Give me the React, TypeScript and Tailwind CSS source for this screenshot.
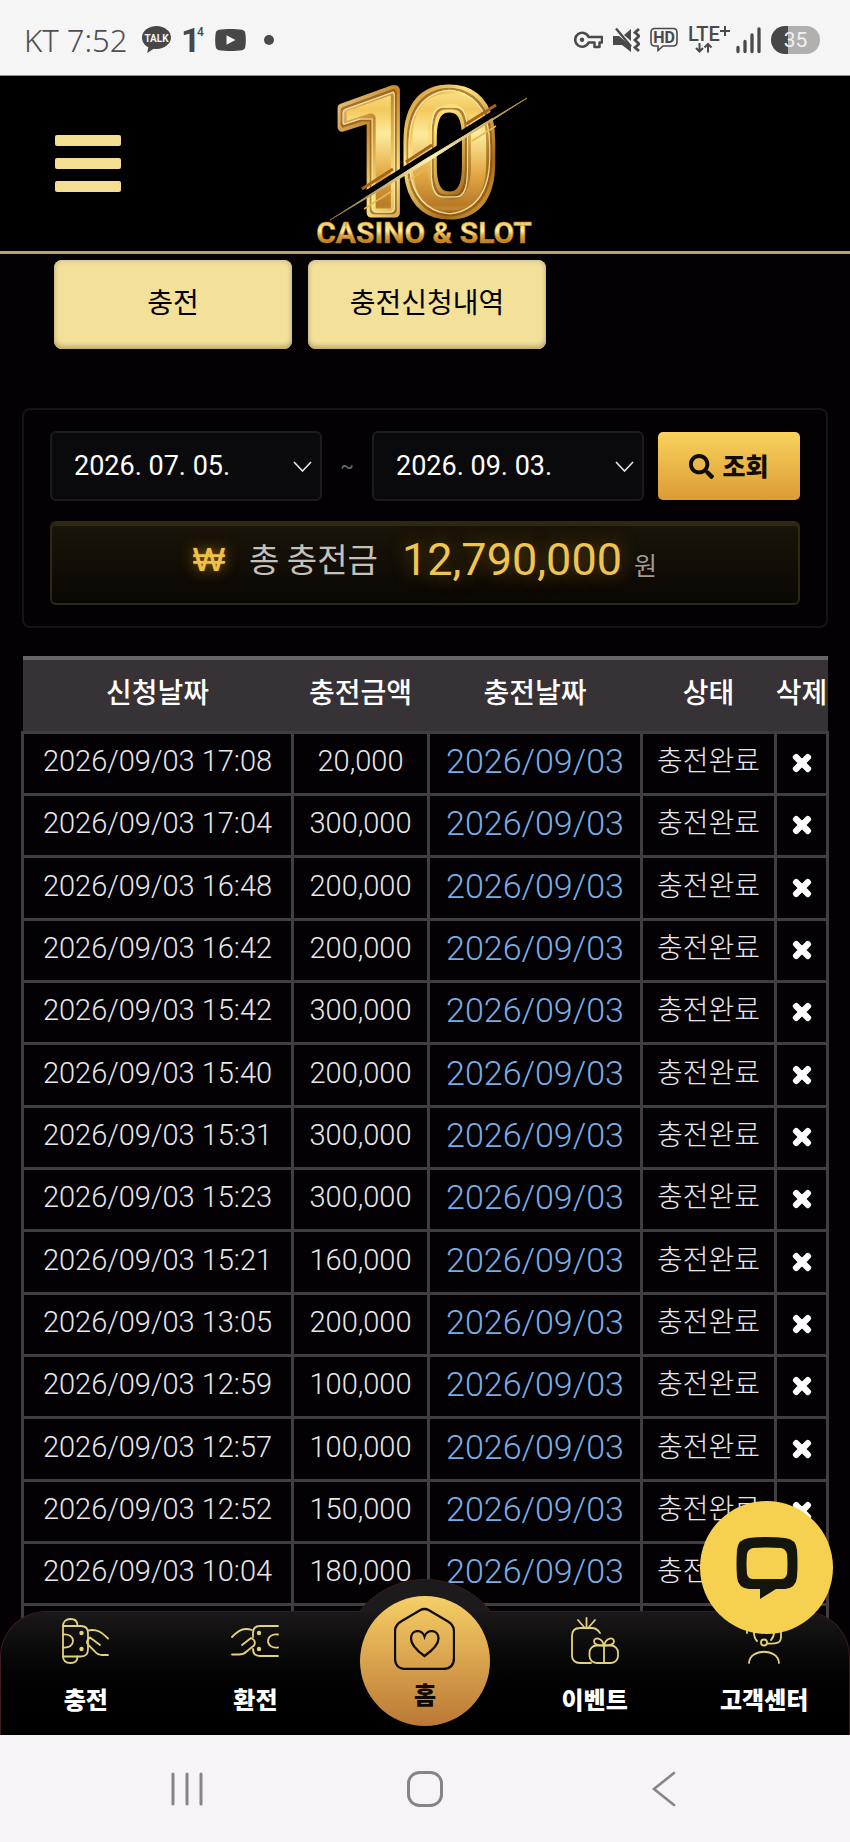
import type { ReactNode } from 'react';
import { FaSearch, FaTimes } from 'react-icons/fa';

interface Deposit {
  requestedAt: string;
  amount: string;
  depositedAt: string;
}

const deposits: Deposit[] = [
  { requestedAt: '2026/09/03 17:08', amount: '20,000', depositedAt: '2026/09/03' },
  { requestedAt: '2026/09/03 17:04', amount: '300,000', depositedAt: '2026/09/03' },
  { requestedAt: '2026/09/03 16:48', amount: '200,000', depositedAt: '2026/09/03' },
  { requestedAt: '2026/09/03 16:42', amount: '200,000', depositedAt: '2026/09/03' },
  { requestedAt: '2026/09/03 15:42', amount: '300,000', depositedAt: '2026/09/03' },
  { requestedAt: '2026/09/03 15:40', amount: '200,000', depositedAt: '2026/09/03' },
  { requestedAt: '2026/09/03 15:31', amount: '300,000', depositedAt: '2026/09/03' },
  { requestedAt: '2026/09/03 15:23', amount: '300,000', depositedAt: '2026/09/03' },
  { requestedAt: '2026/09/03 15:21', amount: '160,000', depositedAt: '2026/09/03' },
  { requestedAt: '2026/09/03 13:05', amount: '200,000', depositedAt: '2026/09/03' },
  { requestedAt: '2026/09/03 12:59', amount: '100,000', depositedAt: '2026/09/03' },
  { requestedAt: '2026/09/03 12:57', amount: '100,000', depositedAt: '2026/09/03' },
  { requestedAt: '2026/09/03 12:52', amount: '150,000', depositedAt: '2026/09/03' },
  { requestedAt: '2026/09/03 10:04', amount: '180,000', depositedAt: '2026/09/03' },
];

function StatusBar() {
  return (
    <div className="flex h-[76px] shrink-0 items-center justify-between border-b border-[#8a8f8c] bg-[#f5f5f5] pt-1 pl-6 pr-[30px] text-[#4f4f4f]">
      <div className="flex items-center">
        <span className="w-[118px] font-['Noto_Sans'] text-[31px] leading-8 font-light whitespace-nowrap">KT 7:52</span>
        <svg className="h-7 w-[29px]" viewBox="0 0 29 28">
          <path d="M14.500 0C6.500 0 0 5 0 11.500c0 4.200 2.600 7.800 6.300 9.800L5.200 27l6.500-4.300c1 .1 1.900.2 2.800.2 8 0 14.500-5.100 14.500-11.400S22.500 0 14.500 0z" fill="#474747" />
          <text x="14.500" y="15.500" textAnchor="middle" fontSize="10" fontWeight="700" fill="#f5f5f5" fontFamily="Roboto, sans-serif">TALK</text>
        </svg>
        <div className="ml-[10px] flex w-[34px] items-start font-['Roboto'] text-[#474747]">
          <span className="w-4 text-[34px] leading-8 font-bold">1</span>
          <span className="pt-[2px] text-[12px] leading-3 font-medium">4</span>
        </div>
        <svg className="h-[22px] w-[31px]" viewBox="0 0 31 22">
          <path d="M4 .8c6-1 17-1 23 0 2 .4 3 1.500 3.300 3.400.7 4 .7 9.600 0 13.600-.3 1.900-1.300 3-3.300 3.400-6 1-17 1-23 0-2-.4-3-1.500-3.300-3.400-.7-4-.7-9.600 0-13.600C1 2.300 2 1.200 4 .8z" fill="#474747" />
          <path d="M11.500 6.200v9.600l9-4.800z" fill="#f5f5f5" />
        </svg>
        <span className="ml-[18px] size-[10px] rounded-full bg-[#4a4a4a]" />
      </div>

      <div className="flex items-center gap-[10px]">
        <svg className="h-[18px] w-[29px]" viewBox="0 0 29 18" fill="none" stroke="#4a4a4a" strokeWidth="2.500">
          <path d="M14.600 6H28v5.500h-2.500V16h-5v-4.500h-5.900A7 7 0 1 1 14.600 6z" strokeLinejoin="round" />
          <circle cx="8" cy="8.800" r="2.200" fill="#4a4a4a" stroke="none" />
        </svg>
        <svg className="h-[26px] w-[27px]" viewBox="0 0 27 26">
          <path d="M0 9h6l12 10v6l-9-7H0zM11 8 18 2v12z" fill="#4a4a4a" />
          <path d="M3 1.500l15 18" stroke="#4a4a4a" strokeWidth="2.400" />
          <path d="M26 2l-4 3.500 4 3.500-4 4 4 4-4 3.500 4 3.500" fill="none" stroke="#4a4a4a" strokeWidth="2.800" />
        </svg>
        <svg className="h-[25px] w-7" viewBox="0 0 28 25">
          <path d="M5 1.500h18q4 0 4 4V15q0 4-4 4H13l-5 4.500V19H5q-4 0-4-4V5.500q0-4 4-4z" fill="none" stroke="#4a4a4a" strokeWidth="1.600" />
          <text x="14" y="16" textAnchor="middle" fontSize="16" fontWeight="700" fill="#4a4a4a" fontFamily="Roboto, sans-serif">HD</text>
        </svg>
        <div className="flex w-[43px] flex-col font-['Roboto'] text-xl leading-4 font-medium text-[#4a4a4a]">
          <span className="flex items-start">
            LTE
            <svg className="h-[10px] w-[10px] shrink-0" viewBox="0 0 10 10" stroke="#4a4a4a" strokeWidth="2">
              <path d="M5 0v10M0 5h10" />
            </svg>
          </span>
          <svg className="ml-[7px] h-[11px] w-[18px]" viewBox="0 0 18 11" fill="none" stroke="#4a4a4a" strokeWidth="2">
            <path d="M4.500 1v8.500M1 6l3.500 3.500L8 6M13 10.500V2M9.500 5.500 13 2l3.500 3.500" />
          </svg>
        </div>
        <svg className="-ml-[6px] h-7 w-[26px]" viewBox="0 0 26 28" stroke="#4a4a4a" strokeWidth="3.300" strokeLinecap="round">
          <path d="M3 21.500v4M10 15.500v10M17 9v16.500M24 3v22.500" />
        </svg>
        <span className="flex h-7 w-[49px] items-center justify-center rounded-full bg-linear-to-r from-[#474747] from-34% to-[#b0b0b0] to-34% font-['Roboto'] text-[21px] leading-7 text-[#f0f0f0]">35</span>
      </div>
    </div>
  );
}

function Logo() {
  return (
    <svg className="h-[175px] w-[260px]" viewBox="5 1 260 175" role="img" aria-label="10 CASINO &amp; SLOT">
      <defs>
        <linearGradient id="face" x1="0" y1="0" x2="0" y2="1">
          <stop offset="0.1" stopColor="#fff3ae" />
          <stop offset="0.28" stopColor="#f3c95c" />
          <stop offset="0.4" stopColor="#fdeb9c" />
          <stop offset="0.6" stopColor="#e2a845" />
          <stop offset="0.75" stopColor="#b87b28" />
          <stop offset="0.9" stopColor="#f5cf6a" />
        </linearGradient>
        <linearGradient id="rim" x1="0" y1="0" x2="1" y2="1">
          <stop offset="0" stopColor="#fff6c8" />
          <stop offset="0.3" stopColor="#c8892c" />
          <stop offset="0.5" stopColor="#ffe27a" />
          <stop offset="0.75" stopColor="#a56a1a" />
          <stop offset="1" stopColor="#ffd968" />
        </linearGradient>
        {/* dark groove and bright edge that run inside the digits' outline */}
        <filter id="bevel" x="-10%" y="-10%" width="120%" height="120%">
          <feMorphology in="SourceAlpha" operator="erode" radius="3" result="outer" />
          <feMorphology in="SourceAlpha" operator="erode" radius="5" result="middle" />
          <feMorphology in="SourceAlpha" operator="erode" radius="6" result="inner" />
          <feComposite in="outer" in2="middle" operator="out" result="groove" />
          <feComposite in="middle" in2="inner" operator="out" result="edge" />
          <feFlood floodColor="#8a4e12" floodOpacity="0.75" />
          <feComposite in2="groove" operator="in" result="dark" />
          <feFlood floodColor="#fff0a8" floodOpacity="0.75" />
          <feComposite in2="edge" operator="in" result="light" />
          <feMerge>
            <feMergeNode in="SourceGraphic" />
            <feMergeNode in="dark" />
            <feMergeNode in="light" />
          </feMerge>
        </filter>
        <linearGradient id="word" x1="0" y1="0" x2="0" y2="1">
          <stop offset="0.1" stopColor="#e7b94c" />
          <stop offset="0.45" stopColor="#fff0a0" />
          <stop offset="0.6" stopColor="#e0a43a" />
          <stop offset="0.9" stopColor="#a4611a" />
        </linearGradient>
        <linearGradient id="blade" x1="0" y1="1" x2="1" y2="0">
          <stop offset="0" stopColor="#8a6526" />
          <stop offset="0.5" stopColor="#fff1b0" />
          <stop offset="1" stopColor="#a8843a" />
        </linearGradient>
      </defs>
      <text
        x="38 110"
        y="138"
        fontFamily="Roboto, sans-serif"
        fontSize="172"
        fontWeight="700"
        fill="url(#face)"
        stroke="url(#rim)"
        strokeWidth="9"
        strokeLinejoin="round"
        filter="url(#bevel)"
      >
        10
      </text>
      <path d="M58 130 214 32" stroke="#000" strokeWidth="6" />
      <path d="M72 114 103 94M116 87 142 70M176 49 206 30" stroke="#a4641c" strokeWidth="3" />
      <path d="M74 134 102 116M118 106 140 91M182 66 206 51" stroke="#e8b850" strokeWidth="1.500" />
      <path d="M40 145 135 84.500 237 23 137 87z" fill="url(#blade)" stroke="url(#blade)" strokeWidth="1" />
      <text x="134" y="168" textAnchor="middle" fontFamily="Roboto, sans-serif" fontSize="30" fontWeight="700" fill="url(#word)" stroke="#c88a2c" strokeWidth="0.500">
        CASINO &amp; SLOT
      </text>
    </svg>
  );
}

function Header() {
  return (
    <header className="grid grid-cols-[1fr_auto_1fr] items-center border-b-[3px] border-[#b9a273] bg-black">
      <button className="ml-[55px] flex w-[66px] flex-col gap-3" aria-label="menu">
        <span className="h-[11px] w-full rounded-xs bg-[#f3de92]" />
        <span className="h-[11px] w-full rounded-xs bg-[#f3de92]" />
        <span className="h-[11px] w-full rounded-xs bg-[#f3de92]" />
      </button>
      <Logo />
    </header>
  );
}

function TabButton({ children }: { children: ReactNode }) {
  return (
    <button className="h-[89px] w-[238px] rounded-lg bg-[#f3e19a] pb-2 text-[28px] leading-9 text-black shadow-[inset_0_-3px_5px_#b9a86c,inset_0_2px_4px_#d9cba0]">
      {children}
    </button>
  );
}

function DateField({ label, value }: { label: string; value: string }) {
  return (
    <div className="flex h-[70px] min-w-0 flex-1 items-center rounded-md border-2 border-[#1c1c1e] bg-[#0a0a0c] pr-2 pl-[22px]">
      <input
        type="text"
        aria-label={label}
        defaultValue={value}
        className="min-w-0 flex-1 bg-transparent font-['Roboto'] text-[27px] leading-8 text-white outline-none"
      />
      <svg className="h-[11px] w-[19px]" viewBox="0 0 19 11" fill="none" stroke="#e8e8e8" strokeWidth="1.600">
        <path d="M1 1l8.500 9L18 1" />
      </svg>
    </div>
  );
}

function SearchPanel() {
  return (
    <section className="mx-[22px] mt-[59px] rounded-lg border-2 border-[#151517] px-[26px] py-[21px]">
      <form className="flex items-center">
        <DateField label="시작일" value="2026. 07. 05." />
        <span className="w-[50px] text-center font-['Roboto'] text-xl text-[#6b6b6b]">~</span>
        <DateField label="종료일" value="2026. 09. 03." />
        <button
          type="button"
          className="ml-[14px] flex h-[68px] w-[142px] items-center justify-center gap-2 rounded-[5px] bg-linear-to-b from-[#f8d25c] to-[#dc9b35] text-[25px] font-black text-[#120c04]"
        >
          <FaSearch className="size-[25px]" />
          조회
        </button>
      </form>
      <div className="mt-5 flex h-[84px] items-center justify-center rounded-md border-2 border-[#2f2811] bg-linear-to-b from-[#1a1409] to-[#0b0703] pb-2 shadow-[inset_0_3px_0_#2f2811]">
        <span className="font-['Liberation_Sans'] text-[34px] text-[#f0c048] [text-shadow:0_0_1px_#f0c048,0_0_14px_#9a7010]">₩</span>
        <span className="ml-6 text-[33px] text-[#c4c1bb]">총 충전금</span>
        <span className="ml-6 font-['Roboto'] text-[45px] leading-none text-[#f0c450] [text-shadow:0_0_18px_#6b5010]">12,790,000</span>
        <span className="ml-3 pt-3 text-[25px] text-[#a09c95]">원</span>
      </div>
    </section>
  );
}

function DepositTable() {
  return (
    <div className="mt-7 px-[21px]">
      <table className="w-full table-fixed border-collapse text-center">
        <colgroup>
          <col className="w-[270px]" />
          <col className="w-[136px]" />
          <col className="w-[213px]" />
          <col className="w-[134px]" />
          <col />
        </colgroup>
        <thead>
          <tr className="h-[74px] border-t-4 border-[#69646a] bg-[#373236] text-[28px] leading-9 font-medium text-white [&_th]:p-0 [&_th]:pb-2 [&_th]:font-medium [&_th]:whitespace-nowrap">
            <th>신청날짜</th>
            <th>충전금액</th>
            <th>충전날짜</th>
            <th>상태</th>
            <th>삭제</th>
          </tr>
        </thead>
        <tbody className="text-[#e9e7ea] [&_td]:border-[3px] [&_td]:border-[#413e41] [&_td]:p-0">
          {deposits.map((deposit) => (
            <tr key={deposit.requestedAt} className="h-[62px] font-['Roboto'] text-[29px] leading-9 font-light nth-[3n]:h-[63px]">
              <td>
                <div className="pb-1">{deposit.requestedAt}</div>
              </td>
              <td>
                <div className="pb-1">{deposit.amount}</div>
              </td>
              <td className="text-[34px] text-[#78aee4]">
                <div className="pb-1">{deposit.depositedAt}</div>
              </td>
              <td className="font-['Noto_Sans_CJK_KR'] text-[28px]">
                <div className="pb-2">충전완료</div>
              </td>
              <td>
                <button className="flex w-full justify-center" aria-label="삭제">
                  <FaTimes className="size-6 text-white" stroke="currentColor" strokeWidth="40" />
                </button>
              </td>
            </tr>
          ))}
          <tr className="h-[62px]">
            <td />
            <td />
            <td />
            <td />
            <td />
          </tr>
        </tbody>
      </table>
    </div>
  );
}

const iconProps = {
  className: 'size-12',
  viewBox: '0 0 48 48',
  fill: 'none',
  stroke: '#e3d27c',
  strokeWidth: 1.8,
  strokeLinecap: 'round' as const,
};

function DepositIcon() {
  return (
    <svg {...iconProps}>
      <path d="M1 9v30c0 4.500 3 7 7.500 7s7-2.500 7-6.500M1 9c0-4.500 3-7 7.500-7s7 2.500 7 6.500" />
      <path d="M1 9h18c5 0 7 3 7 7v16c0 4-2 7.500-7 7.500H1M1 17.500c6.500-.5 10 2.500 10 6.500s-3.500 7-10 6.500" />
      <path d="M26 13.500c9-2 14 2 20 8M28 20.500l10 7.500M28 20.500c-4 3-4 6-1 8l6 6c2 2.500 4 3.500 7 3.500h6" />
      <circle cx="19.500" cy="16" r="2.200" fill="#e3d27c" stroke="none" />
      <circle cx="19.500" cy="32" r="2.200" fill="#e3d27c" stroke="none" />
    </svg>
  );
}

function WithdrawIcon() {
  return (
    <svg {...iconProps}>
      <path d="M47 9H29c-5 0-7 3-7 7v4M47 39H29c-5 0-7-3-7-7M47 17.500c-6-1-10 2.500-10 6.500s4 7.500 10 6.500" />
      <path d="M1 20c6-6 11-10 20-7M11 28l9-7c5 2 5 7 1 9l-6 5c-2 2-4 2.500-7 2.500H1" />
      <circle cx="28" cy="16" r="2.200" fill="#e3d27c" stroke="none" />
      <circle cx="28" cy="32" r="2.200" fill="#e3d27c" stroke="none" />
    </svg>
  );
}

function EventIcon() {
  return (
    <svg {...iconProps}>
      <path d="M20 46H9c-5 0-8-3-8-7V19c0-5 3-8 8-8h12c4 0 6 2 8 5M15.500 10V1M13 10 7 3M18 10l6-7" />
      <rect x="18.500" y="28.500" width="28.500" height="17.500" rx="7" />
      <path d="M33 46V29M33 28.500c-2-8-10-9-10-4 0 3 4 4 10 4zM33 28.500c2-8 10-9 10-4 0 3-4 4-10 4z" />
    </svg>
  );
}

function SupportIcon() {
  return (
    <svg {...iconProps}>
      <path d="M9 46c1-15 29-15 30 0M7 16v-3C9-2 39-2 41 12v8c0 6-4 7-14 6.500M14 15c0 4 1 7 3 9M34 15c0 4-1 6-3 8" />
      <circle cx="24" cy="25.500" r="3" />
    </svg>
  );
}

function HomeIcon() {
  return (
    <svg className="h-[63px] w-[61px]" viewBox="0 0 61 63" fill="none" stroke="#110a02" strokeWidth="2.300">
      <path d="M26 3.200q4.500-2.400 9 0L54 14.500q6 3.500 6 10V51q0 11-11 11H12Q1 62 1 51V24.500q0-6.500 6-10z" />
      <path d="M30.500 49C22 43 17 37 17 31.500c0-9 11-10 13.500-2 2.500-8 14-7 14 2C44.500 37 39 43 30.500 49z" />
    </svg>
  );
}

const navItem = 'flex flex-col items-center gap-4 pt-[5px] text-2xl leading-9 font-black text-white';

function BottomNav() {
  return (
    <nav className="absolute inset-x-0 bottom-0">
      {/* raised lip behind the home button */}
      <div className="absolute -top-8 left-1/2 size-[168px] -translate-x-1/2 rounded-full border border-[#3c1c1e] bg-[#1c1a1a] [clip-path:inset(0_0_135px_0)]" />
      <div className="grid h-[124px] grid-cols-5 rounded-t-[46px] border border-b-0 border-[#3c1c1e] bg-linear-to-b from-[#1a1818] to-black">
        <a href="#" className={navItem}>
          <DepositIcon />
          충전
        </a>
        <a href="#" className={navItem}>
          <WithdrawIcon />
          환전
        </a>
        <a
          href="#"
          className="relative z-10 -mt-4 flex size-[130px] flex-col items-center justify-self-center rounded-full bg-linear-to-b from-[#f6cf66] to-[#bb7836] pt-[11px] text-2xl leading-9 font-black text-[#110a02]"
        >
          <HomeIcon />
          <span className="pt-[6px]">홈</span>
        </a>
        <a href="#" className={navItem}>
          <EventIcon />
          이벤트
        </a>
        <a href="#" className={navItem}>
          <SupportIcon />
          고객센터
        </a>
      </div>
    </nav>
  );
}

function ChatButton() {
  return (
    <button
      aria-label="chat"
      className="absolute right-[17px] bottom-[101px] z-20 flex size-[133px] items-center justify-center rounded-full bg-[#f6d04f]"
    >
      <svg className="h-[62px] w-[62px]" viewBox="0 0 62 62">
        <path d="M13 1q18-2 36 0 11 1 12 12 1 14 0 27-1 11-12 12h-9L24 62V42h21q5 0 6-5 1-10 0-20-1-5-6-6-14-1-28 0-5 1-6 6-1 10 0 20 1 5 6 5h7v10H13Q2 51 1 40q-1-13 0-27Q2 2 13 1z" fill="#151510" />
      </svg>
    </button>
  );
}

function SystemBar() {
  return (
    <div className="flex h-[107px] shrink-0 items-center justify-center gap-[204px] bg-[#f6f4f7]">
      <button aria-label="recents">
        <svg className="h-9 w-8" viewBox="0 0 32 36" stroke="#858486" strokeWidth="3" strokeLinecap="round">
          <path d="M2 3v30M16 3v30M30 3v30" />
        </svg>
      </button>
      <button aria-label="home">
        <svg className="h-9 w-9" viewBox="0 0 36 36" fill="none" stroke="#858486" strokeWidth="3">
          <rect x="1.500" y="1.500" width="33" height="33" rx="11" />
        </svg>
      </button>
      <button aria-label="back">
        <svg className="h-9 w-8" viewBox="0 0 32 36" fill="none" stroke="#858486" strokeWidth="2.600" strokeLinecap="round">
          <path d="M27 2 7 18l20 16" />
        </svg>
      </button>
    </div>
  );
}

export default function App() {
  return (
    <div className="flex h-screen flex-col bg-[#030104] font-['Noto_Sans_CJK_KR',sans-serif]">
      <StatusBar />
      <div className="relative min-h-0 flex-1 overflow-hidden">
        <Header />
        <main>
          <div className="flex gap-4 pt-[6px] pl-[54px]">
            <TabButton>충전</TabButton>
            <TabButton>충전신청내역</TabButton>
          </div>
          <SearchPanel />
          <DepositTable />
        </main>
        <ChatButton />
        <BottomNav />
      </div>
      <SystemBar />
    </div>
  );
}
